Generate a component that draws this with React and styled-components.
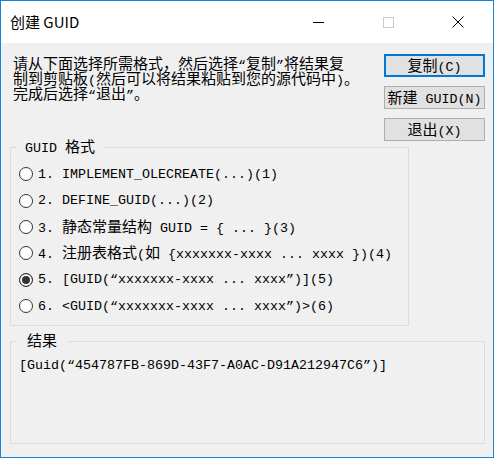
import React, { useState } from 'react';
import styled, { createGlobalStyle } from 'styled-components';

const GUID = '454787FB-869D-43F7-A0AC-D91A212947C6';

const options = [
  '1. IMPLEMENT_OLECREATE(...)(1)',
  '2. DEFINE_GUID(...)(2)',
  '3. 静态常量结构 GUID = { ... }(3)',
  '4. 注册表格式(如 {xxxxxxx-xxxx ... xxxx })(4)',
  '5. [GUID(“xxxxxxx-xxxx ... xxxx”)](5)',
  '6. <GUID(“xxxxxxx-xxxx ... xxxx”)>(6)',
];

const formatGuid = (n) => {
  if (n === 4) return `{${GUID}}`;
  if (n === 6) return `<Guid(“${GUID}”)>`;
  return `[Guid(“${GUID}”)]`;
};

// CJK runs get their own (wider) font, the rest stays monospace
const CJK = /([\u2e80-\u9fff\u3000-\u303f\uff00-\uffef]+)/;
const Mixed = ({ text }) =>
  text.split(CJK).map((part, i) => (i % 2 ? <Han key={i}>{part}</Han> : part));

export default function App() {
  const [selected, setSelected] = useState(5);

  return (
    <Window>
      <GlobalStyle />
      <TitleBar>
        <Title>创建 GUID</Title>
        <CaptionButton>
          <svg width="11" height="11" viewBox="0 0 11 11">
            <path d="M0 5.5h11" stroke="#000" strokeWidth="1" />
          </svg>
        </CaptionButton>
        <CaptionButton>
          <svg width="11" height="11" viewBox="0 0 11 11">
            <rect x="0.5" y="0.5" width="10" height="10" fill="none" stroke="#cccccc" />
          </svg>
        </CaptionButton>
        <CaptionButton>
          <svg width="12" height="12" viewBox="0 0 12 12">
            <path d="M0.5 0.5L11.5 11.5M11.5 0.5L0.5 11.5" stroke="#000" strokeWidth="1" />
          </svg>
        </CaptionButton>
      </TitleBar>

      <Content>
        <TopRow>
          <Instructions>
            <Line><Mixed text="请从下面选择所需格式，然后选择“复制”将结果复" /></Line>
            <Line><Mixed text="制到剪贴板(然后可以将结果粘贴到您的源代码中)。" /></Line>
            <Line><Mixed text="完成后选择“退出”。" /></Line>
          </Instructions>
          <ButtonColumn>
            <DialogButton $default><Mixed text="复制(C)" /></DialogButton>
            <DialogButton><Mixed text="新建 GUID(N)" /></DialogButton>
            <DialogButton><Mixed text="退出(X)" /></DialogButton>
          </ButtonColumn>
        </TopRow>

        <FormatGroup>
          <Legend $gap={9}><Mixed text="GUID 格式" /></Legend>
          <OptionList>
            {options.map((label, i) => (
              <Option key={i}>
                <Radio
                  type="radio"
                  name="format"
                  checked={selected === i + 1}
                  onChange={() => setSelected(i + 1)}
                />
                <span><Mixed text={label} /></span>
              </Option>
            ))}
          </OptionList>
        </FormatGroup>

        <ResultGroup>
          <Legend $gap={11}><Mixed text="结果" /></Legend>
          <ResultText>{formatGuid(selected)}</ResultText>
        </ResultGroup>
      </Content>
    </Window>
  );
}

const GlobalStyle = createGlobalStyle`
  body {
    margin: 0;
    background: #ffffff;
  }
`;

const Window = styled.div`
  width: 494px;
  height: 458px;
  box-sizing: border-box;
  border: 1px solid #1883d7;
  display: flex;
  flex-direction: column;
  background: #f0f0f0;
  color: #000;
  font-family: "Liberation Mono", "Noto Sans CJK SC", monospace;
  font-size: 13.33px;
  line-height: 15px;
`;

const Han = styled.span`
  font-family: "Noto Sans CJK SC", sans-serif;
  font-size: 15px;
  line-height: 15px;
`;

const TitleBar = styled.div`
  height: 42px;
  flex: none;
  display: flex;
  align-items: center;
  background: #ffffff;
`;

const Title = styled.div`
  flex: 1;
  padding-left: 9px;
  font-family: "Noto Sans CJK SC", sans-serif;
  font-size: 15px;
  line-height: 20px;
`;

const CaptionButton = styled.div`
  width: 70px;
  height: 42px;
  display: flex;
  align-items: center;
  justify-content: center;
`;

const Content = styled.div`
  flex: 1;
  display: flex;
  flex-direction: column;
  padding: 11px 8px 13px 9px;
  min-height: 0;
`;

const TopRow = styled.div`
  display: flex;
  justify-content: space-between;
`;

const Instructions = styled.div`
  margin: 1px 0 0 3px;
  white-space: nowrap;
`;

const Line = styled.div`
  height: 15px;
`;

const ButtonColumn = styled.div`
  display: flex;
  flex-direction: column;
  gap: 9px;
  width: 101px;
`;

const DialogButton = styled.button`
  height: 23px;
  padding: 0;
  box-sizing: border-box;
  background: #e1e1e1;
  border: ${(p) => (p.$default ? '2px solid #0078d7' : '1px solid #adadad')};
  font: inherit;
  color: #000;
  white-space: nowrap;
`;

const FormatGroup = styled.fieldset`
  width: 399px;
  box-sizing: border-box;
  margin: -3px 0 0;
  padding: 0 0 6px;
  border: 1px solid #dcdcdc;
  min-width: 0;
`;

const ResultGroup = styled.fieldset`
  flex: 1;
  margin: 6px 0 0;
  padding: 0;
  border: 1px solid #dcdcdc;
  min-width: 0;
`;

const Legend = styled.legend`
  margin-left: 5px;
  padding: 0 ${(p) => p.$gap}px;
  line-height: 15px;
`;

const OptionList = styled.div`
  display: flex;
  flex-direction: column;
  padding: 5px 0 0 8px;
`;

const Option = styled.label`
  height: 26.4px;
  display: flex;
  align-items: center;
  gap: 5px;
  white-space: nowrap;
`;

const Radio = styled.input`
  appearance: none;
  width: 14px;
  height: 14px;
  margin: 0;
  box-sizing: border-box;
  border: 1px solid #333333;
  border-radius: 50%;
  background: #ffffff;

  &:checked {
    background: #333333;
    box-shadow: inset 0 0 0 2px #ffffff;
  }
`;

const ResultText = styled.div`
  padding: 8px 0 0 8px;
  white-space: nowrap;
`;
